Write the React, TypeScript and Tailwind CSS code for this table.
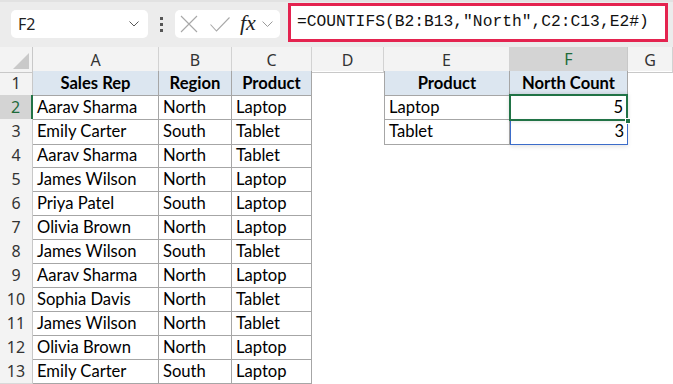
const cols = 'grid grid-cols-[33px_126px_73px_80px_72px_126px_118px_1fr]';

const sales = [
  ['Aarav Sharma', 'North', 'Laptop'],
  ['Emily Carter', 'South', 'Tablet'],
  ['Aarav Sharma', 'North', 'Tablet'],
  ['James Wilson', 'North', 'Laptop'],
  ['Priya Patel', 'South', 'Laptop'],
  ['Olivia Brown', 'North', 'Laptop'],
  ['James Wilson', 'South', 'Tablet'],
  ['Aarav Sharma', 'North', 'Laptop'],
  ['Sophia Davis', 'North', 'Tablet'],
  ['James Wilson', 'North', 'Tablet'],
  ['Olivia Brown', 'North', 'Laptop'],
  ['Emily Carter', 'South', 'Laptop'],
];

const summary: Record<number, [string, string]> = {
  1: ['Product', 'North Count'],
  2: ['Laptop', '5'],
  3: ['Tablet', '3'],
};

const ui = "font-['Segoe_UI','Noto_Sans',sans-serif]";
const cellFont = "font-['Lato','Carlito',sans-serif] text-[16.6px]";

function Chevron({ w }: { w: number }) {
  return (
    <svg width={w} height={w * 0.6} viewBox="0 0 10 6" fill="none" stroke="currentColor" strokeWidth={0.9}>
      <path d="M0.5 0.5 L5 5 L9.5 0.5" />
    </svg>
  );
}

function Toolbar() {
  return (
    <div className="h-[47px] bg-[#ececec] border-t-[2px] border-[#e2e2e2] flex items-start">
      {/* Name box */}
      <div className={`ml-[11px] mt-[8px] w-[137px] h-[28px] bg-white rounded-[5px] flex items-center justify-between pl-[7px] pr-[9px] ${ui} text-[16px] text-[#222]`}>
        <span>F2</span>
        <span className="text-[#444]">
          <Chevron w={10} />
        </span>
      </div>
      <div className="w-[27px] mt-[8px] h-[28px] flex flex-col items-center justify-center gap-[3px]">
        <span className="w-[3px] h-[3px] bg-[#555]" />
        <span className="w-[3px] h-[3px] bg-[#555]" />
        <span className="w-[3px] h-[3px] bg-[#555]" />
      </div>
      {/* Cancel / enter / fx */}
      <div className="mt-[8px] w-[105px] h-[28px] bg-white rounded-[5px] flex items-center pl-[5px] text-[#a8a8a8]">
        <svg width="18" height="18" viewBox="0 0 18 18" stroke="currentColor" strokeWidth={1.1}>
          <path d="M1 1 L17 17 M17 1 L1 17" />
        </svg>
        <svg width="20" height="15" viewBox="0 0 20 15" fill="none" stroke="currentColor" strokeWidth={1.1} className="ml-[12px]">
          <path d="M0.5 7.5 L6.5 14 L19.5 0.5" />
        </svg>
        <span className="ml-[10px] font-['Liberation_Serif',serif] italic text-[22px] text-[#222] leading-none -mt-[2px]">fx</span>
        <span className="ml-[6px] text-[#999]">
          <Chevron w={11} />
        </span>
      </div>
      {/* Formula */}
      <div className="ml-[8px] mt-[1px] w-[380px] h-[39px] border-[3px] border-[#e4234f] bg-white flex items-center pl-[6px] font-['Liberation_Mono',monospace] text-[16.3px] text-[#111] whitespace-nowrap">
        =COUNTIFS(B2:B13,"North",C2:C13,E2#)
      </div>
    </div>
  );
}

function ColumnHeaders() {
  const letters = ['A', 'B', 'C', 'D', 'E', 'F', 'G'];
  return (
    <div className={`${cols} h-[24px] bg-[#f3f3f3] ${ui} text-[16px] text-[#333]`}>
      <div className="border-r border-b border-[#c8c8c8] relative">
        <div className="absolute right-[3px] bottom-[3px] w-0 h-0 border-l-[16px] border-l-transparent border-b-[16px] border-b-[#c9c9c9]" />
      </div>
      {letters.map((l) =>
        l === 'F' ? (
          <div key={l} className="flex items-center justify-center bg-[#d4d4d4] text-[#1d6a3a] border-r border-[#c8c8c8] border-b-[2px] border-b-[#217346]">
            {l}
          </div>
        ) : (
          <div key={l} className="flex items-center justify-center border-r border-b border-[#d2d2d2] border-b-[#c8c8c8]">
            {l}
          </div>
        )
      )}
    </div>
  );
}

function RowHeader({ n }: { n: number }) {
  if (n === 2) {
    return (
      <div className={`flex items-center justify-center bg-[#d4d4d4] text-[#1d6a3a] border-b border-[#d2d2d2] border-r-[2px] border-r-[#217346] ${ui} text-[16px]`}>
        {n}
      </div>
    );
  }
  return (
    <div className={`flex items-center justify-center bg-[#f3f3f3] text-[#333] border-b border-[#d9d9d9] border-r border-r-[#c8c8c8] ${ui} text-[16px]`}>
      {n}
    </div>
  );
}

function Cell({ text, head, left }: { text: string; head?: boolean; left?: boolean }) {
  return (
    <div
      className={`flex items-center border-r border-b border-[#a6a6a6] ${left ? 'border-l' : ''} ${
        head ? 'bg-[#dce6f0] font-bold justify-center' : 'pl-[4px]'
      } ${cellFont} text-black whitespace-nowrap overflow-hidden`}
    >
      {text}
    </div>
  );
}

export default function App() {
  const rows = [['Sales Rep', 'Region', 'Product'], ...sales];
  return (
    <div className="w-[673px] h-[384px] overflow-hidden bg-white">
      <Toolbar />
      <ColumnHeaders />
      {rows.map((r, i) => {
        const n = i + 1;
        const s = summary[n];
        return (
          <div key={n} className={`${cols} h-[24px]`}>
            <RowHeader n={n} />
            <Cell text={r[0]} head={n === 1} />
            <Cell text={r[1]} head={n === 1} />
            <Cell text={r[2]} head={n === 1} />
            <div />
            {s ? <Cell text={s[0]} head={n === 1} left /> : <div />}
            {s ? (
              n === 2 ? (
                <div className="relative">
                  <div className={`absolute inset-[-1px_0_-1px_-1px] border-[2px] border-[#217346] shadow-[0_0_4px_rgba(0,0,0,0.15)] flex items-center justify-end pr-[3px] ${cellFont} text-black`}>
                    {s[1]}
                  </div>
                  <div className="absolute right-[-3px] bottom-[-4px] w-[6px] h-[6px] bg-[#217346] border border-white" />
                </div>
              ) : n === 3 ? (
                <div className={`flex items-center justify-end pr-[3px] border border-t-0 border-[#3b6cc9] ${cellFont} text-black shadow-[0_2px_4px_rgba(0,0,0,0.1)]`}>
                  {s[1]}
                </div>
              ) : (
                <Cell text={s[1]} head />
              )
            ) : (
              <div />
            )}
            <div />
          </div>
        );
      })}
    </div>
  );
}
